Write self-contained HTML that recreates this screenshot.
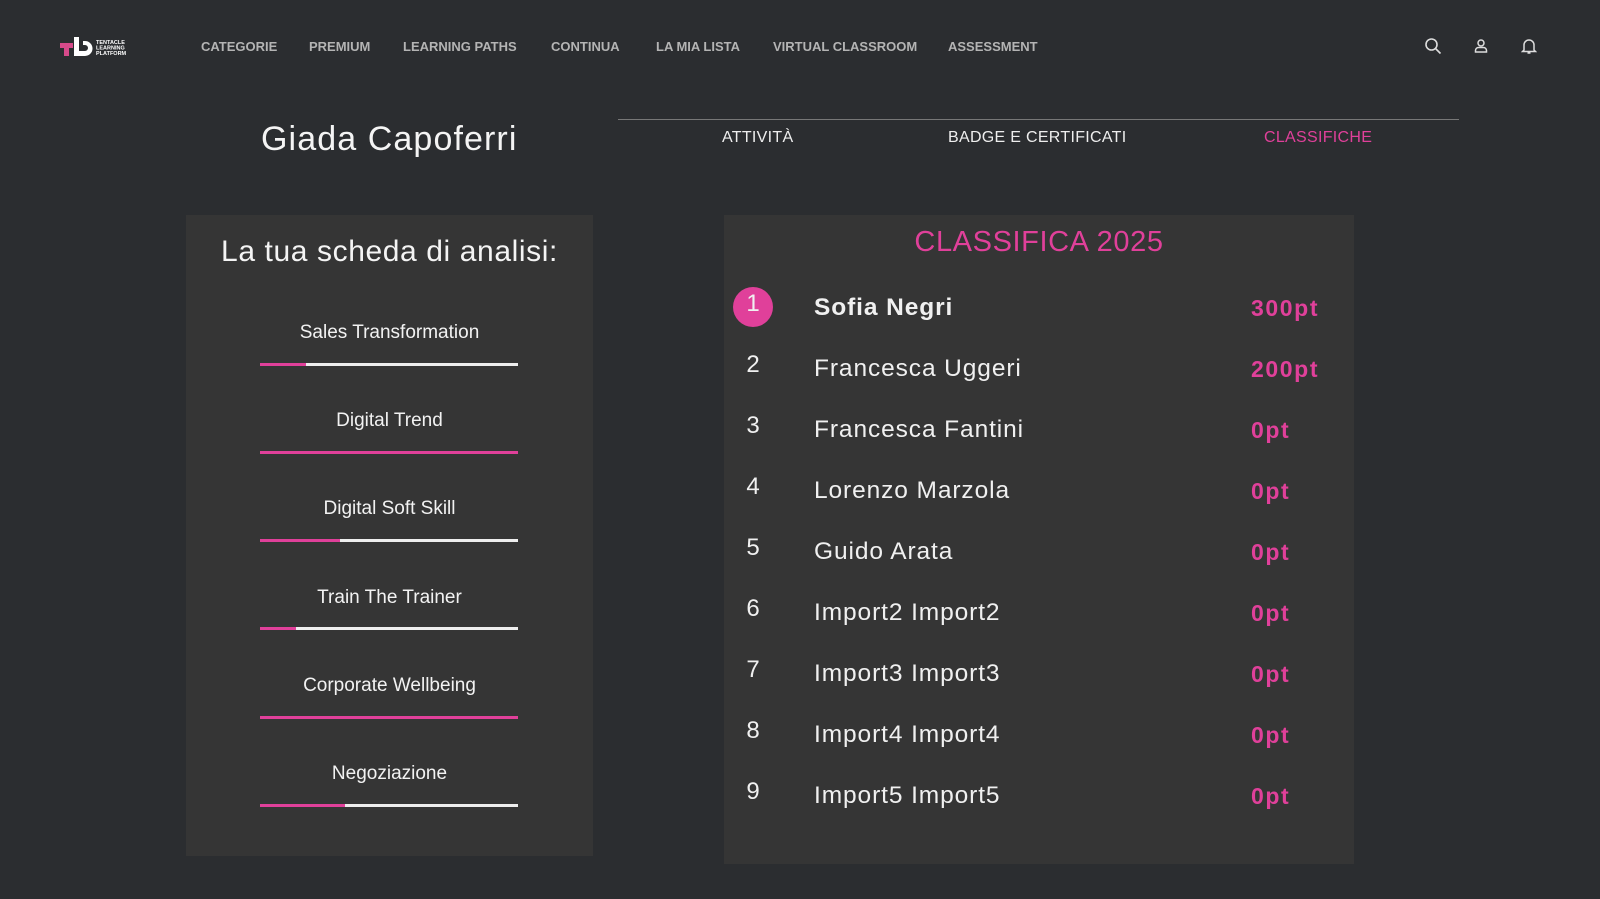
<!DOCTYPE html>
<html><head><meta charset="utf-8"><style>
*{margin:0;padding:0;box-sizing:border-box}
body{width:1600px;height:899px;background:#2b2d30;font-family:"Liberation Sans",sans-serif;color:#fff;position:relative;overflow:hidden}
.a{position:absolute}
.nav{top:39px;font-size:13px;font-weight:bold;color:#b4b4b4;letter-spacing:0}
.panel{background:#353535}
.lbl{text-align:center;font-size:19px;color:#f2f2f2}
.bar{left:260px;width:258px;height:3px;background:#eee}
.bar i{display:block;height:3px;background:#e0409a}
.n{left:733px;width:40px;text-align:center;font-size:24px;color:#f0f0f0}
.nm{left:814px;font-size:24.5px;color:#f0f0f0;letter-spacing:0.9px}
.pt{left:1251px;font-size:23px;font-weight:bold;color:#e0409a;letter-spacing:1.6px}
</style></head><body>
<svg class="a" style="left:58px;top:34px" width="72" height="26" viewBox="0 0 72 26">
<path d="M2 9h13v5H11v8H6v-8H2z" fill="#d64a8a"/><path d="M16 3h5v14h6a3 3 0 0 0 0-6h-2V7h2a7.5 7.5 0 0 1 0 15H16z" fill="#fff"/>
<text x="38" y="10" font-size="5.5" font-weight="bold" fill="#fff" font-family="Liberation Sans">TENTACLE</text>
<text x="38" y="15.5" font-size="5.5" font-weight="bold" fill="#fff" font-family="Liberation Sans">LEARNING</text>
<text x="38" y="21" font-size="5.5" font-weight="bold" fill="#fff" font-family="Liberation Sans">PLATFORM</text>
</svg>
<div class="a nav" style="left:201px">CATEGORIE</div>
<div class="a nav" style="left:309px">PREMIUM</div>
<div class="a nav" style="left:403px">LEARNING PATHS</div>
<div class="a nav" style="left:551px">CONTINUA</div>
<div class="a nav" style="left:656px">LA MIA LISTA</div>
<div class="a nav" style="left:773px">VIRTUAL CLASSROOM</div>
<div class="a nav" style="left:948px">ASSESSMENT</div>
<svg class="a" style="left:1424px;top:37px" width="18" height="18" viewBox="0 0 18 18" fill="none" stroke="#ddd" stroke-width="1.6"><circle cx="7.5" cy="7.5" r="5.5"/><path d="M11.5 11.5l5 5"/></svg>
<svg class="a" style="left:1473px;top:38px" width="16" height="16" viewBox="0 0 16 16" fill="none" stroke="#ddd" stroke-width="1.5"><circle cx="8" cy="5" r="3"/><path d="M2.5 14v-1.5a3 3 0 0 1 3-3h5a3 3 0 0 1 3 3V14z"/></svg>
<svg class="a" style="left:1521px;top:37px" width="16" height="18" viewBox="0 0 16 18" fill="none" stroke="#ddd" stroke-width="1.5"><path d="M3 13V8a5 5 0 0 1 10 0v5l1.5 1.5h-13zM6.5 16h3"/></svg>

<div class="a" style="left:261px;top:120px;font-size:34px;color:#f4f4f4;letter-spacing:1.1px">Giada Capoferri</div>
<div class="a" style="left:618px;top:119px;width:841px;height:1px;background:#777"></div>
<div class="a" style="left:722px;top:129px;font-size:16px;color:#eee;letter-spacing:0.3px">ATTIVITÀ</div>
<div class="a" style="left:948px;top:129px;font-size:16px;color:#eee;letter-spacing:0.3px">BADGE E CERTIFICATI</div>
<div class="a" style="left:1264px;top:129px;font-size:16px;color:#e0409a;letter-spacing:0.3px">CLASSIFICHE</div>

<div class="a panel" style="left:186px;top:215px;width:407px;height:641px"></div>
<div class="a" style="left:186px;width:407px;text-align:center;top:235px;font-size:30px;color:#f4f4f4;letter-spacing:0.6px">La tua scheda di analisi:</div>
<div class="a lbl" style="left:186px;width:407px;top:322px">Sales Transformation</div>
<div class="a bar" style="top:363px"><i style="width:46px"></i></div>
<div class="a lbl" style="left:186px;width:407px;top:410px">Digital Trend</div>
<div class="a bar" style="top:451px"><i style="width:258px"></i></div>
<div class="a lbl" style="left:186px;width:407px;top:498px">Digital Soft Skill</div>
<div class="a bar" style="top:539px"><i style="width:80px"></i></div>
<div class="a lbl" style="left:186px;width:407px;top:587px">Train The Trainer</div>
<div class="a bar" style="top:627px"><i style="width:36px"></i></div>
<div class="a lbl" style="left:186px;width:407px;top:675px">Corporate Wellbeing</div>
<div class="a bar" style="top:716px"><i style="width:258px"></i></div>
<div class="a lbl" style="left:186px;width:407px;top:763px">Negoziazione</div>
<div class="a bar" style="top:804px"><i style="width:85px"></i></div>

<div class="a panel" style="left:724px;top:215px;width:630px;height:649px"></div>
<div class="a" style="left:724px;width:630px;text-align:center;top:226px;font-size:29px;color:#e0409a;letter-spacing:0.6px">CLASSIFICA 2025</div>
<div class="a" style="left:733px;top:287px;width:40px;height:40px;border-radius:50%;background:#e0409a"></div>
<div class="a n" style="top:290px">1</div><div class="a nm" style="top:294px;font-weight:bold">Sofia Negri</div><div class="a pt" style="top:295px">300pt</div>
<div class="a n" style="top:351px">2</div><div class="a nm" style="top:355px">Francesca Uggeri</div><div class="a pt" style="top:356px">200pt</div>
<div class="a n" style="top:412px">3</div><div class="a nm" style="top:416px">Francesca Fantini</div><div class="a pt" style="top:417px">0pt</div>
<div class="a n" style="top:473px">4</div><div class="a nm" style="top:477px">Lorenzo Marzola</div><div class="a pt" style="top:478px">0pt</div>
<div class="a n" style="top:534px">5</div><div class="a nm" style="top:538px">Guido Arata</div><div class="a pt" style="top:539px">0pt</div>
<div class="a n" style="top:595px">6</div><div class="a nm" style="top:599px">Import2 Import2</div><div class="a pt" style="top:600px">0pt</div>
<div class="a n" style="top:656px">7</div><div class="a nm" style="top:660px">Import3 Import3</div><div class="a pt" style="top:661px">0pt</div>
<div class="a n" style="top:717px">8</div><div class="a nm" style="top:721px">Import4 Import4</div><div class="a pt" style="top:722px">0pt</div>
<div class="a n" style="top:778px">9</div><div class="a nm" style="top:782px">Import5 Import5</div><div class="a pt" style="top:783px">0pt</div>
</body></html>
